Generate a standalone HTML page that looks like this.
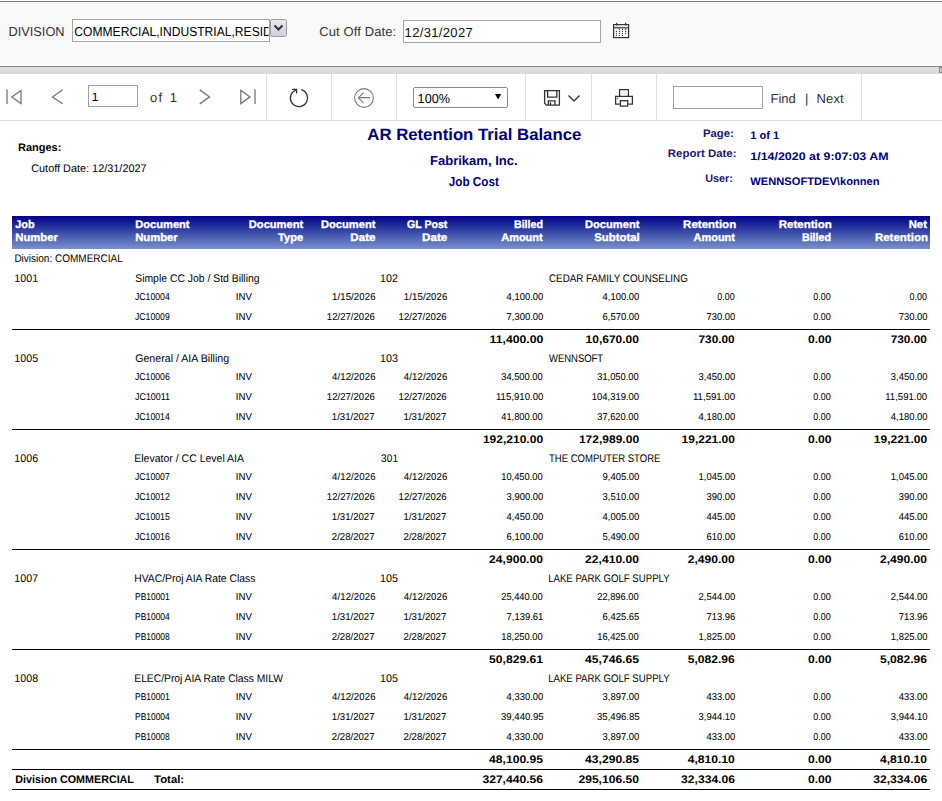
<!DOCTYPE html>
<html><head><meta charset="utf-8"><style>
html,body{margin:0;padding:0;background:#fff;width:942px;height:801px;overflow:hidden}
svg{position:absolute;left:0;top:0;font-family:"Liberation Sans",sans-serif;text-rendering:geometricPrecision}
</style></head><body>
<svg width="942" height="801" viewBox="0 0 942 801">
<defs><linearGradient id="hg" x1="0" y1="0" x2="0" y2="1"><stop offset="0" stop-color="#000088"/><stop offset="0.5" stop-color="#3a4ca8"/><stop offset="1" stop-color="#7b91cc"/></linearGradient>
<clipPath id="c1"><rect x="73" y="20" width="195.5" height="21"/></clipPath>
<linearGradient id="dd" x1="0" y1="0" x2="0" y2="1"><stop offset="0" stop-color="#e8e8ee"/><stop offset="1" stop-color="#cfd0da"/></linearGradient></defs>
<!-- parameter area -->
<rect x="0" y="0" width="942" height="67" fill="#fff"/>
<rect x="0" y="1" width="942" height="1" fill="#808080"/>
<rect x="0" y="3" width="942" height="62" fill="#f9f9f9"/>
<rect x="0" y="66" width="942" height="1" fill="#858585"/>
<rect x="0" y="67" width="942" height="7" fill="#dcdcdc"/>
<rect x="939" y="67" width="3" height="6" fill="#8c8c8c"/><rect x="940" y="68" width="2" height="4" fill="#c2c2c2"/>
<rect x="72.5" y="19.5" width="197" height="22" fill="#fff" stroke="#a5a5a5" stroke-width="1"/>
<rect x="270.5" y="19.5" width="16" height="17" rx="2" fill="url(#dd)" stroke="#9a9aa4" stroke-width="1"/>
<path d="M274.5 25.5 L278.5 29.5 L282.5 25.5" fill="none" stroke="#333" stroke-width="2"/>
<rect x="403.5" y="20.5" width="197" height="22" fill="#fff" stroke="#a5a5a5" stroke-width="1"/>
<g fill="none" stroke="#333" stroke-width="1.2">
<rect x="613.6" y="24.6" width="15" height="13" />
<line x1="613.6" y1="27.8" x2="628.6" y2="27.8"/>
<line x1="616.6" y1="22.8" x2="616.6" y2="25.5"/><line x1="625.6" y1="22.8" x2="625.6" y2="25.5"/>
</g>
<g fill="#333">
<circle cx="619.5" cy="29.4" r="0.6"/><circle cx="622.5" cy="29.4" r="0.6"/><circle cx="625.6" cy="29.4" r="0.6"/>
<circle cx="616.4" cy="31.4" r="0.6"/><circle cx="619.5" cy="31.4" r="0.6"/><circle cx="622.5" cy="31.4" r="0.6"/><circle cx="625.6" cy="31.4" r="0.6"/>
<circle cx="616.4" cy="33.4" r="0.6"/><circle cx="619.5" cy="33.4" r="0.6"/><circle cx="622.5" cy="33.4" r="0.6"/><circle cx="625.6" cy="33.4" r="0.6"/>
<circle cx="616.4" cy="35.4" r="0.6"/><circle cx="619.5" cy="35.4" r="0.6"/><circle cx="622.5" cy="35.4" r="0.6"/>
</g>
<!-- toolbar -->
<rect x="0" y="120" width="942" height="1" fill="#e0e0e0"/>
<rect x="266" y="74" width="1" height="46" fill="#e0e0e0"/><rect x="331" y="74" width="1" height="46" fill="#e0e0e0"/><rect x="396" y="74" width="1" height="46" fill="#e0e0e0"/><rect x="525" y="74" width="1" height="46" fill="#e0e0e0"/><rect x="591" y="74" width="1" height="46" fill="#e0e0e0"/><rect x="656" y="74" width="1" height="46" fill="#e0e0e0"/><rect x="861" y="74" width="1" height="46" fill="#e0e0e0"/>
<g fill="none" stroke="#777" stroke-width="1.3">
<line x1="7" y1="89.3" x2="7" y2="104.1"/>
<path d="M21 90.5 L11.8 97 L21 103.5 Z"/>
<path d="M62.6 89.8 L52.5 97 L62.6 103.8"/>
<path d="M199.8 89.9 L209.5 96.9 L199.8 103.9"/>
<path d="M240.8 90.2 L250 96.9 L240.8 103.6 Z"/>
<line x1="255" y1="89.3" x2="255" y2="104.1"/>
</g>
<rect x="88.5" y="85.5" width="49" height="21" fill="#fff" stroke="#a0a0a0"/>
<g fill="none" stroke="#333" stroke-width="1.3">
<path d="M301.3 89.7 A8.6 8.6 0 1 1 292.9 91.9 L296.4 89.4"/>
<path d="M292.2 89.4 H296.6 V93.5"/>
</g>
<g fill="none" stroke="#7a7a7a" stroke-width="1.1">
<circle cx="364" cy="98" r="9.4"/>
<path d="M369.8 97.6 H358.8 M363.6 92.6 L358.4 97.8 L363.6 103.2"/>
</g>
<rect x="413.5" y="87.5" width="94" height="20" rx="1.5" fill="#fff" stroke="#8a8a8a"/>
<path d="M495 94 L501.2 94 L498.1 99.6 Z" fill="#000"/>
<g fill="none" stroke="#333" stroke-width="1.3">
<path d="M544.6 90.6 H559.4 V105.1 H546.4 L544.6 103.3 Z"/>
<path d="M547.6 90.6 V97.2 H556.8 V90.6"/>
<path d="M548.4 105.1 V100.8 H555 V105.1"/>
<line x1="550.5" y1="102.3" x2="550.5" y2="105"/>
<path d="M568.5 95.5 L574 101 L579.5 95.5"/>
</g>
<g fill="none" stroke="#333" stroke-width="1.3">
<path d="M619.6 96.3 V89.6 H628.4 V96.3"/>
<path d="M619.6 104.1 H615.6 V96.3 H632.4 V104.1 H628.4"/>
<rect x="620.3" y="100.7" width="7.4" height="5.4"/>
</g>
<circle cx="617.6" cy="98.3" r="0.6" fill="#333"/>
<rect x="673.5" y="86.5" width="89" height="22" fill="#fff" stroke="#a0a0a0"/>
<!-- report header bar -->
<rect x="12" y="216" width="918" height="33" fill="url(#hg)"/>
<rect x="12" y="329" width="918" height="1" fill="#000"/><rect x="12" y="429" width="918" height="1" fill="#000"/><rect x="12" y="549" width="918" height="1" fill="#000"/><rect x="12" y="649" width="918" height="1" fill="#000"/><rect x="12" y="749" width="918" height="1" fill="#000"/><rect x="12" y="769" width="918" height="1" fill="#000"/><rect x="12" y="789" width="918" height="1" fill="#000"/>
<text x="8.50" y="36.00" font-size="13" fill="#333" textLength="56.08" lengthAdjust="spacingAndGlyphs">DIVISION</text><text x="74.30" y="36.00" font-size="13" fill="#000" clip-path="url(#c1)" textLength="197.53" lengthAdjust="spacingAndGlyphs">COMMERCIAL,INDUSTRIAL,RESID</text><text x="319.30" y="36.00" font-size="13" fill="#333" textLength="76.84" lengthAdjust="spacing">Cut Off Date:</text><text x="404.60" y="36.50" font-size="13" fill="#111" textLength="68.08" lengthAdjust="spacing">12/31/2027</text><text x="91.70" y="101.00" font-size="12" fill="#000" >1</text><text x="150.00" y="102.00" font-size="13" fill="#333" textLength="12.14" lengthAdjust="spacing">of</text><text x="169.80" y="102.00" font-size="13" fill="#333" >1</text><text x="417.60" y="103.00" font-size="13" fill="#000" textLength="32.35" lengthAdjust="spacingAndGlyphs">100%</text><text x="770.50" y="103.00" font-size="13" fill="#333" >Find</text><text x="805.00" y="103.00" font-size="13" fill="#333" >|</text><text x="816.60" y="103.00" font-size="13" fill="#333" textLength="27.03" lengthAdjust="spacing">Next</text><text transform="translate(18.00 151.00) scale(1.0000 1)" font-size="11" font-weight="bold" fill="#000">Ranges:</text><text transform="translate(31.20 172.00) scale(0.9897 1)" font-size="11" fill="#000">Cutoff Date: 12/31/2027</text><text transform="translate(367.30 140.00) scale(1.0147 1)" font-size="16.5" font-weight="bold" fill="#000080">AR Retention Trial Balance</text><text transform="translate(430.00 165.00) scale(1.0023 1)" font-size="13" font-weight="bold" fill="#000080">Fabrikam, Inc.</text><text transform="translate(448.70 186.00) scale(0.9018 1)" font-size="13" font-weight="bold" fill="#000080">Job Cost</text><text transform="translate(733.80 137.30) scale(1.0276 1)" font-size="11" font-weight="bold" fill="#1a1a6e" text-anchor="end">Page:</text><text transform="translate(736.56 157.20) scale(1.0415 1)" font-size="11" font-weight="bold" fill="#1a1a6e" text-anchor="end">Report Date:</text><text transform="translate(732.92 182.40) scale(0.9857 1)" font-size="11" font-weight="bold" fill="#1a1a6e" text-anchor="end">User:</text><text transform="translate(750.30 139.10) scale(1.0069 1)" font-size="11" font-weight="bold" fill="#000080">1 of 1</text><text transform="translate(750.30 160.30) scale(1.1287 1)" font-size="11" font-weight="bold" fill="#000080">1/14/2020 at 9:07:03 AM</text><text transform="translate(750.30 185.00) scale(1.0118 1)" font-size="11" font-weight="bold" fill="#000080">WENNSOFTDEV\konnen</text><text transform="translate(15.30 228.00) scale(0.9895 1)" font-size="11" font-weight="bold" fill="#fff" stroke="#fff" stroke-width="0.35">Job</text><text transform="translate(15.30 241.00) scale(1.0238 1)" font-size="11" font-weight="bold" fill="#fff" stroke="#fff" stroke-width="0.35">Number</text><text transform="translate(135.20 228.00) scale(1.0111 1)" font-size="11" font-weight="bold" fill="#fff" stroke="#fff" stroke-width="0.35">Document</text><text transform="translate(135.20 241.00) scale(1.0238 1)" font-size="11" font-weight="bold" fill="#fff" stroke="#fff" stroke-width="0.35">Number</text><text transform="translate(303.18 228.00) scale(1.0111 1)" font-size="11" font-weight="bold" fill="#fff" stroke="#fff" stroke-width="0.35" text-anchor="end">Document</text><text transform="translate(303.26 241.00) scale(1.0120 1)" font-size="11" font-weight="bold" fill="#fff" stroke="#fff" stroke-width="0.35" text-anchor="end">Type</text><text transform="translate(375.38 228.00) scale(1.0111 1)" font-size="11" font-weight="bold" fill="#fff" stroke="#fff" stroke-width="0.35" text-anchor="end">Document</text><text transform="translate(375.44 241.00) scale(1.0542 1)" font-size="11" font-weight="bold" fill="#fff" stroke="#fff" stroke-width="0.35" text-anchor="end">Date</text><text transform="translate(447.38 228.00) scale(0.9619 1)" font-size="11" font-weight="bold" fill="#fff" stroke="#fff" stroke-width="0.35" text-anchor="end">GL Post</text><text transform="translate(447.24 241.00) scale(1.0542 1)" font-size="11" font-weight="bold" fill="#fff" stroke="#fff" stroke-width="0.35" text-anchor="end">Date</text><text transform="translate(543.05 228.00) scale(0.9733 1)" font-size="11" font-weight="bold" fill="#fff" stroke="#fff" stroke-width="0.35" text-anchor="end">Billed</text><text transform="translate(542.65 241.00) scale(0.9976 1)" font-size="11" font-weight="bold" fill="#fff" stroke="#fff" stroke-width="0.35" text-anchor="end">Amount</text><text transform="translate(639.38 228.00) scale(1.0111 1)" font-size="11" font-weight="bold" fill="#fff" stroke="#fff" stroke-width="0.35" text-anchor="end">Document</text><text transform="translate(639.60 241.00) scale(1.0295 1)" font-size="11" font-weight="bold" fill="#fff" stroke="#fff" stroke-width="0.35" text-anchor="end">Subtotal</text><text transform="translate(736.17 228.00) scale(1.0460 1)" font-size="11" font-weight="bold" fill="#fff" stroke="#fff" stroke-width="0.35" text-anchor="end">Retention</text><text transform="translate(734.95 241.00) scale(0.9976 1)" font-size="11" font-weight="bold" fill="#fff" stroke="#fff" stroke-width="0.35" text-anchor="end">Amount</text><text transform="translate(831.87 228.00) scale(1.0460 1)" font-size="11" font-weight="bold" fill="#fff" stroke="#fff" stroke-width="0.35" text-anchor="end">Retention</text><text transform="translate(831.05 241.00) scale(0.9733 1)" font-size="11" font-weight="bold" fill="#fff" stroke="#fff" stroke-width="0.35" text-anchor="end">Billed</text><text transform="translate(926.93 228.00) scale(1.0278 1)" font-size="11" font-weight="bold" fill="#fff" stroke="#fff" stroke-width="0.35" text-anchor="end">Net</text><text transform="translate(927.97 241.00) scale(1.0460 1)" font-size="11" font-weight="bold" fill="#fff" stroke="#fff" stroke-width="0.35" text-anchor="end">Retention</text><text transform="translate(14.39 262.00) scale(0.9093 1)" font-size="11" fill="#000">Division: COMMERCIAL</text><text transform="translate(14.33 282.00) scale(0.9696 1)" font-size="11" fill="#000">1001</text><text transform="translate(135.20 282.00) scale(0.9458 1)" font-size="11" fill="#000">Simple CC Job / Std Billing</text><text transform="translate(380.12 282.00) scale(0.9765 1)" font-size="11" fill="#000">102</text><text transform="translate(549.00 282.00) scale(0.8929 1)" font-size="11" fill="#000">CEDAR FAMILY COUNSELING</text><text transform="translate(135.00 300.00) scale(1 1.04)" font-size="9.6" fill="#000" stroke="#000" stroke-width="0.05" textLength="34.71" lengthAdjust="spacingAndGlyphs">JC10004</text><text transform="translate(235.80 300.00) scale(1 1.04)" font-size="9.6" fill="#000" stroke="#000" stroke-width="0.05" >INV</text><text transform="translate(375.49 300.00) scale(1 1.04)" font-size="9.6" fill="#000" stroke="#000" stroke-width="0.05" text-anchor="end" textLength="43.49" lengthAdjust="spacing">1/15/2026</text><text transform="translate(447.29 300.00) scale(1 1.04)" font-size="9.6" fill="#000" stroke="#000" stroke-width="0.05" text-anchor="end" textLength="43.49" lengthAdjust="spacing">1/15/2026</text><text transform="translate(543.36 300.00) scale(1 1.04)" font-size="9.6" fill="#000" stroke="#000" stroke-width="0.05" text-anchor="end" textLength="36.76" lengthAdjust="spacingAndGlyphs">4,100.00</text><text transform="translate(639.36 300.00) scale(1 1.04)" font-size="9.6" fill="#000" stroke="#000" stroke-width="0.05" text-anchor="end" textLength="36.76" lengthAdjust="spacingAndGlyphs">4,100.00</text><text transform="translate(734.69 300.00) scale(1 1.04)" font-size="9.6" fill="#000" stroke="#000" stroke-width="0.05" text-anchor="end" textLength="17.39" lengthAdjust="spacingAndGlyphs">0.00</text><text transform="translate(830.69 300.00) scale(1 1.04)" font-size="9.6" fill="#000" stroke="#000" stroke-width="0.05" text-anchor="end" textLength="17.39" lengthAdjust="spacingAndGlyphs">0.00</text><text transform="translate(926.89 300.00) scale(1 1.04)" font-size="9.6" fill="#000" stroke="#000" stroke-width="0.05" text-anchor="end" textLength="17.39" lengthAdjust="spacingAndGlyphs">0.00</text><text transform="translate(135.00 320.00) scale(1 1.04)" font-size="9.6" fill="#000" stroke="#000" stroke-width="0.05" textLength="34.71" lengthAdjust="spacingAndGlyphs">JC10009</text><text transform="translate(235.80 320.00) scale(1 1.04)" font-size="9.6" fill="#000" stroke="#000" stroke-width="0.05" >INV</text><text transform="translate(374.82 320.00) scale(1 1.04)" font-size="9.6" fill="#000" stroke="#000" stroke-width="0.05" text-anchor="end" >12/27/2026</text><text transform="translate(446.62 320.00) scale(1 1.04)" font-size="9.6" fill="#000" stroke="#000" stroke-width="0.05" text-anchor="end" >12/27/2026</text><text transform="translate(543.36 320.00) scale(1 1.04)" font-size="9.6" fill="#000" stroke="#000" stroke-width="0.05" text-anchor="end" textLength="36.76" lengthAdjust="spacingAndGlyphs">7,300.00</text><text transform="translate(639.36 320.00) scale(1 1.04)" font-size="9.6" fill="#000" stroke="#000" stroke-width="0.05" text-anchor="end" textLength="36.76" lengthAdjust="spacingAndGlyphs">6,570.00</text><text transform="translate(735.34 320.00) scale(1 1.04)" font-size="9.6" fill="#000" stroke="#000" stroke-width="0.05" text-anchor="end" textLength="28.84" lengthAdjust="spacingAndGlyphs">730.00</text><text transform="translate(830.69 320.00) scale(1 1.04)" font-size="9.6" fill="#000" stroke="#000" stroke-width="0.05" text-anchor="end" textLength="17.39" lengthAdjust="spacingAndGlyphs">0.00</text><text transform="translate(927.54 320.00) scale(1 1.04)" font-size="9.6" fill="#000" stroke="#000" stroke-width="0.05" text-anchor="end" textLength="28.84" lengthAdjust="spacingAndGlyphs">730.00</text><text transform="translate(543.38 342.70) scale(1.1125 1)" font-size="11" font-weight="bold" fill="#000" text-anchor="end">11,400.00</text><text transform="translate(638.93 342.70) scale(1.0898 1)" font-size="11" font-weight="bold" fill="#000" text-anchor="end">10,670.00</text><text transform="translate(734.63 342.70) scale(1.0735 1)" font-size="11" font-weight="bold" fill="#000" text-anchor="end">730.00</text><text transform="translate(831.46 342.70) scale(1.1000 1)" font-size="11" font-weight="bold" fill="#000" text-anchor="end">0.00</text><text transform="translate(926.83 342.70) scale(1.0735 1)" font-size="11" font-weight="bold" fill="#000" text-anchor="end">730.00</text><text transform="translate(14.33 362.00) scale(0.9696 1)" font-size="11" fill="#000">1005</text><text transform="translate(135.20 362.00) scale(0.9660 1)" font-size="11" fill="#000">General / AIA Billing</text><text transform="translate(380.12 362.00) scale(0.9765 1)" font-size="11" fill="#000">103</text><text transform="translate(549.00 362.00) scale(0.8603 1)" font-size="11" fill="#000">WENNSOFT</text><text transform="translate(135.00 380.00) scale(1 1.04)" font-size="9.6" fill="#000" stroke="#000" stroke-width="0.05" textLength="34.71" lengthAdjust="spacingAndGlyphs">JC10006</text><text transform="translate(235.80 380.00) scale(1 1.04)" font-size="9.6" fill="#000" stroke="#000" stroke-width="0.05" >INV</text><text transform="translate(375.49 380.00) scale(1 1.04)" font-size="9.6" fill="#000" stroke="#000" stroke-width="0.05" text-anchor="end" textLength="43.49" lengthAdjust="spacing">4/12/2026</text><text transform="translate(447.29 380.00) scale(1 1.04)" font-size="9.6" fill="#000" stroke="#000" stroke-width="0.05" text-anchor="end" textLength="43.49" lengthAdjust="spacing">4/12/2026</text><text transform="translate(542.69 380.00) scale(1 1.04)" font-size="9.6" fill="#000" stroke="#000" stroke-width="0.05" text-anchor="end" textLength="41.49" lengthAdjust="spacingAndGlyphs">34,500.00</text><text transform="translate(638.69 380.00) scale(1 1.04)" font-size="9.6" fill="#000" stroke="#000" stroke-width="0.05" text-anchor="end" textLength="41.49" lengthAdjust="spacingAndGlyphs">31,050.00</text><text transform="translate(735.36 380.00) scale(1 1.04)" font-size="9.6" fill="#000" stroke="#000" stroke-width="0.05" text-anchor="end" textLength="36.76" lengthAdjust="spacingAndGlyphs">3,450.00</text><text transform="translate(830.69 380.00) scale(1 1.04)" font-size="9.6" fill="#000" stroke="#000" stroke-width="0.05" text-anchor="end" textLength="17.39" lengthAdjust="spacingAndGlyphs">0.00</text><text transform="translate(927.56 380.00) scale(1 1.04)" font-size="9.6" fill="#000" stroke="#000" stroke-width="0.05" text-anchor="end" textLength="36.76" lengthAdjust="spacingAndGlyphs">3,450.00</text><text transform="translate(135.00 400.00) scale(1 1.04)" font-size="9.6" fill="#000" stroke="#000" stroke-width="0.05" textLength="35.00" lengthAdjust="spacingAndGlyphs">JC10011</text><text transform="translate(235.80 400.00) scale(1 1.04)" font-size="9.6" fill="#000" stroke="#000" stroke-width="0.05" >INV</text><text transform="translate(374.82 400.00) scale(1 1.04)" font-size="9.6" fill="#000" stroke="#000" stroke-width="0.05" text-anchor="end" >12/27/2026</text><text transform="translate(446.62 400.00) scale(1 1.04)" font-size="9.6" fill="#000" stroke="#000" stroke-width="0.05" text-anchor="end" >12/27/2026</text><text transform="translate(543.31 400.00) scale(1 1.04)" font-size="9.6" fill="#000" stroke="#000" stroke-width="0.05" text-anchor="end" >115,910.00</text><text transform="translate(639.02 400.00) scale(1 1.04)" font-size="9.6" fill="#000" stroke="#000" stroke-width="0.05" text-anchor="end" textLength="47.22" lengthAdjust="spacingAndGlyphs">104,319.00</text><text transform="translate(734.97 400.00) scale(1 1.04)" font-size="9.6" fill="#000" stroke="#000" stroke-width="0.05" text-anchor="end" >11,591.00</text><text transform="translate(830.69 400.00) scale(1 1.04)" font-size="9.6" fill="#000" stroke="#000" stroke-width="0.05" text-anchor="end" textLength="17.39" lengthAdjust="spacingAndGlyphs">0.00</text><text transform="translate(927.17 400.00) scale(1 1.04)" font-size="9.6" fill="#000" stroke="#000" stroke-width="0.05" text-anchor="end" >11,591.00</text><text transform="translate(135.00 420.00) scale(1 1.04)" font-size="9.6" fill="#000" stroke="#000" stroke-width="0.05" textLength="34.71" lengthAdjust="spacingAndGlyphs">JC10014</text><text transform="translate(235.80 420.00) scale(1 1.04)" font-size="9.6" fill="#000" stroke="#000" stroke-width="0.05" >INV</text><text transform="translate(374.49 420.00) scale(1 1.04)" font-size="9.6" fill="#000" stroke="#000" stroke-width="0.05" text-anchor="end" >1/31/2027</text><text transform="translate(446.29 420.00) scale(1 1.04)" font-size="9.6" fill="#000" stroke="#000" stroke-width="0.05" text-anchor="end" >1/31/2027</text><text transform="translate(542.69 420.00) scale(1 1.04)" font-size="9.6" fill="#000" stroke="#000" stroke-width="0.05" text-anchor="end" textLength="41.49" lengthAdjust="spacingAndGlyphs">41,800.00</text><text transform="translate(638.69 420.00) scale(1 1.04)" font-size="9.6" fill="#000" stroke="#000" stroke-width="0.05" text-anchor="end" textLength="41.49" lengthAdjust="spacingAndGlyphs">37,620.00</text><text transform="translate(735.36 420.00) scale(1 1.04)" font-size="9.6" fill="#000" stroke="#000" stroke-width="0.05" text-anchor="end" textLength="36.76" lengthAdjust="spacingAndGlyphs">4,180.00</text><text transform="translate(830.69 420.00) scale(1 1.04)" font-size="9.6" fill="#000" stroke="#000" stroke-width="0.05" text-anchor="end" textLength="17.39" lengthAdjust="spacingAndGlyphs">0.00</text><text transform="translate(927.56 420.00) scale(1 1.04)" font-size="9.6" fill="#000" stroke="#000" stroke-width="0.05" text-anchor="end" textLength="36.76" lengthAdjust="spacingAndGlyphs">4,180.00</text><text transform="translate(543.07 442.70) scale(1.0927 1)" font-size="11" font-weight="bold" fill="#000" text-anchor="end">192,210.00</text><text transform="translate(639.07 442.70) scale(1.0927 1)" font-size="11" font-weight="bold" fill="#000" text-anchor="end">172,989.00</text><text transform="translate(734.93 442.70) scale(1.0898 1)" font-size="11" font-weight="bold" fill="#000" text-anchor="end">19,221.00</text><text transform="translate(831.46 442.70) scale(1.1000 1)" font-size="11" font-weight="bold" fill="#000" text-anchor="end">0.00</text><text transform="translate(927.13 442.70) scale(1.0898 1)" font-size="11" font-weight="bold" fill="#000" text-anchor="end">19,221.00</text><text transform="translate(14.33 462.00) scale(0.9696 1)" font-size="11" fill="#000">1006</text><text transform="translate(134.24 462.00) scale(0.9553 1)" font-size="11" fill="#000">Elevator / CC Level AIA</text><text transform="translate(381.10 462.00) scale(0.9222 1)" font-size="11" fill="#000">301</text><text transform="translate(549.00 462.00) scale(0.8651 1)" font-size="11" fill="#000">THE COMPUTER STORE</text><text transform="translate(135.00 480.00) scale(1 1.04)" font-size="9.6" fill="#000" stroke="#000" stroke-width="0.05" textLength="34.71" lengthAdjust="spacingAndGlyphs">JC10007</text><text transform="translate(235.80 480.00) scale(1 1.04)" font-size="9.6" fill="#000" stroke="#000" stroke-width="0.05" >INV</text><text transform="translate(375.49 480.00) scale(1 1.04)" font-size="9.6" fill="#000" stroke="#000" stroke-width="0.05" text-anchor="end" textLength="43.49" lengthAdjust="spacing">4/12/2026</text><text transform="translate(447.29 480.00) scale(1 1.04)" font-size="9.6" fill="#000" stroke="#000" stroke-width="0.05" text-anchor="end" textLength="43.49" lengthAdjust="spacing">4/12/2026</text><text transform="translate(542.69 480.00) scale(1 1.04)" font-size="9.6" fill="#000" stroke="#000" stroke-width="0.05" text-anchor="end" textLength="41.49" lengthAdjust="spacingAndGlyphs">10,450.00</text><text transform="translate(639.36 480.00) scale(1 1.04)" font-size="9.6" fill="#000" stroke="#000" stroke-width="0.05" text-anchor="end" textLength="36.76" lengthAdjust="spacingAndGlyphs">9,405.00</text><text transform="translate(735.36 480.00) scale(1 1.04)" font-size="9.6" fill="#000" stroke="#000" stroke-width="0.05" text-anchor="end" textLength="36.76" lengthAdjust="spacingAndGlyphs">1,045.00</text><text transform="translate(830.69 480.00) scale(1 1.04)" font-size="9.6" fill="#000" stroke="#000" stroke-width="0.05" text-anchor="end" textLength="17.39" lengthAdjust="spacingAndGlyphs">0.00</text><text transform="translate(927.56 480.00) scale(1 1.04)" font-size="9.6" fill="#000" stroke="#000" stroke-width="0.05" text-anchor="end" textLength="36.76" lengthAdjust="spacingAndGlyphs">1,045.00</text><text transform="translate(135.00 500.00) scale(1 1.04)" font-size="9.6" fill="#000" stroke="#000" stroke-width="0.05" textLength="34.71" lengthAdjust="spacingAndGlyphs">JC10012</text><text transform="translate(235.80 500.00) scale(1 1.04)" font-size="9.6" fill="#000" stroke="#000" stroke-width="0.05" >INV</text><text transform="translate(374.82 500.00) scale(1 1.04)" font-size="9.6" fill="#000" stroke="#000" stroke-width="0.05" text-anchor="end" >12/27/2026</text><text transform="translate(446.62 500.00) scale(1 1.04)" font-size="9.6" fill="#000" stroke="#000" stroke-width="0.05" text-anchor="end" >12/27/2026</text><text transform="translate(543.36 500.00) scale(1 1.04)" font-size="9.6" fill="#000" stroke="#000" stroke-width="0.05" text-anchor="end" textLength="36.76" lengthAdjust="spacingAndGlyphs">3,900.00</text><text transform="translate(639.36 500.00) scale(1 1.04)" font-size="9.6" fill="#000" stroke="#000" stroke-width="0.05" text-anchor="end" textLength="36.76" lengthAdjust="spacingAndGlyphs">3,510.00</text><text transform="translate(735.34 500.00) scale(1 1.04)" font-size="9.6" fill="#000" stroke="#000" stroke-width="0.05" text-anchor="end" textLength="28.84" lengthAdjust="spacingAndGlyphs">390.00</text><text transform="translate(830.69 500.00) scale(1 1.04)" font-size="9.6" fill="#000" stroke="#000" stroke-width="0.05" text-anchor="end" textLength="17.39" lengthAdjust="spacingAndGlyphs">0.00</text><text transform="translate(927.54 500.00) scale(1 1.04)" font-size="9.6" fill="#000" stroke="#000" stroke-width="0.05" text-anchor="end" textLength="28.84" lengthAdjust="spacingAndGlyphs">390.00</text><text transform="translate(135.00 520.00) scale(1 1.04)" font-size="9.6" fill="#000" stroke="#000" stroke-width="0.05" textLength="34.71" lengthAdjust="spacingAndGlyphs">JC10015</text><text transform="translate(235.80 520.00) scale(1 1.04)" font-size="9.6" fill="#000" stroke="#000" stroke-width="0.05" >INV</text><text transform="translate(374.49 520.00) scale(1 1.04)" font-size="9.6" fill="#000" stroke="#000" stroke-width="0.05" text-anchor="end" >1/31/2027</text><text transform="translate(446.29 520.00) scale(1 1.04)" font-size="9.6" fill="#000" stroke="#000" stroke-width="0.05" text-anchor="end" >1/31/2027</text><text transform="translate(543.36 520.00) scale(1 1.04)" font-size="9.6" fill="#000" stroke="#000" stroke-width="0.05" text-anchor="end" textLength="36.76" lengthAdjust="spacingAndGlyphs">4,450.00</text><text transform="translate(639.36 520.00) scale(1 1.04)" font-size="9.6" fill="#000" stroke="#000" stroke-width="0.05" text-anchor="end" textLength="36.76" lengthAdjust="spacingAndGlyphs">4,005.00</text><text transform="translate(735.34 520.00) scale(1 1.04)" font-size="9.6" fill="#000" stroke="#000" stroke-width="0.05" text-anchor="end" textLength="28.84" lengthAdjust="spacingAndGlyphs">445.00</text><text transform="translate(830.69 520.00) scale(1 1.04)" font-size="9.6" fill="#000" stroke="#000" stroke-width="0.05" text-anchor="end" textLength="17.39" lengthAdjust="spacingAndGlyphs">0.00</text><text transform="translate(927.54 520.00) scale(1 1.04)" font-size="9.6" fill="#000" stroke="#000" stroke-width="0.05" text-anchor="end" textLength="28.84" lengthAdjust="spacingAndGlyphs">445.00</text><text transform="translate(135.00 540.00) scale(1 1.04)" font-size="9.6" fill="#000" stroke="#000" stroke-width="0.05" textLength="34.71" lengthAdjust="spacingAndGlyphs">JC10016</text><text transform="translate(235.80 540.00) scale(1 1.04)" font-size="9.6" fill="#000" stroke="#000" stroke-width="0.05" >INV</text><text transform="translate(374.49 540.00) scale(1 1.04)" font-size="9.6" fill="#000" stroke="#000" stroke-width="0.05" text-anchor="end" >2/28/2027</text><text transform="translate(446.29 540.00) scale(1 1.04)" font-size="9.6" fill="#000" stroke="#000" stroke-width="0.05" text-anchor="end" >2/28/2027</text><text transform="translate(543.36 540.00) scale(1 1.04)" font-size="9.6" fill="#000" stroke="#000" stroke-width="0.05" text-anchor="end" textLength="36.76" lengthAdjust="spacingAndGlyphs">6,100.00</text><text transform="translate(639.36 540.00) scale(1 1.04)" font-size="9.6" fill="#000" stroke="#000" stroke-width="0.05" text-anchor="end" textLength="36.76" lengthAdjust="spacingAndGlyphs">5,490.00</text><text transform="translate(735.34 540.00) scale(1 1.04)" font-size="9.6" fill="#000" stroke="#000" stroke-width="0.05" text-anchor="end" textLength="28.84" lengthAdjust="spacingAndGlyphs">610.00</text><text transform="translate(830.69 540.00) scale(1 1.04)" font-size="9.6" fill="#000" stroke="#000" stroke-width="0.05" text-anchor="end" textLength="17.39" lengthAdjust="spacingAndGlyphs">0.00</text><text transform="translate(927.54 540.00) scale(1 1.04)" font-size="9.6" fill="#000" stroke="#000" stroke-width="0.05" text-anchor="end" textLength="28.84" lengthAdjust="spacingAndGlyphs">610.00</text><text transform="translate(542.93 562.70) scale(1.1000 1)" font-size="11" font-weight="bold" fill="#000" text-anchor="end">24,900.00</text><text transform="translate(638.93 562.70) scale(1.1000 1)" font-size="11" font-weight="bold" fill="#000" text-anchor="end">22,410.00</text><text transform="translate(734.81 562.70) scale(1.0977 1)" font-size="11" font-weight="bold" fill="#000" text-anchor="end">2,490.00</text><text transform="translate(831.46 562.70) scale(1.1000 1)" font-size="11" font-weight="bold" fill="#000" text-anchor="end">0.00</text><text transform="translate(927.01 562.70) scale(1.0977 1)" font-size="11" font-weight="bold" fill="#000" text-anchor="end">2,490.00</text><text transform="translate(14.33 582.00) scale(0.9696 1)" font-size="11" fill="#000">1007</text><text transform="translate(134.26 582.00) scale(0.9398 1)" font-size="11" fill="#000">HVAC/Proj AIA Rate Class</text><text transform="translate(380.12 582.00) scale(0.9765 1)" font-size="11" fill="#000">105</text><text transform="translate(548.13 582.00) scale(0.8739 1)" font-size="11" fill="#000">LAKE PARK GOLF SUPPLY</text><text transform="translate(135.00 600.00) scale(1 1.04)" font-size="9.6" fill="#000" stroke="#000" stroke-width="0.05" textLength="34.78" lengthAdjust="spacingAndGlyphs">PB10001</text><text transform="translate(235.80 600.00) scale(1 1.04)" font-size="9.6" fill="#000" stroke="#000" stroke-width="0.05" >INV</text><text transform="translate(375.49 600.00) scale(1 1.04)" font-size="9.6" fill="#000" stroke="#000" stroke-width="0.05" text-anchor="end" textLength="43.49" lengthAdjust="spacing">4/12/2026</text><text transform="translate(447.29 600.00) scale(1 1.04)" font-size="9.6" fill="#000" stroke="#000" stroke-width="0.05" text-anchor="end" textLength="43.49" lengthAdjust="spacing">4/12/2026</text><text transform="translate(542.69 600.00) scale(1 1.04)" font-size="9.6" fill="#000" stroke="#000" stroke-width="0.05" text-anchor="end" textLength="41.49" lengthAdjust="spacingAndGlyphs">25,440.00</text><text transform="translate(638.69 600.00) scale(1 1.04)" font-size="9.6" fill="#000" stroke="#000" stroke-width="0.05" text-anchor="end" textLength="41.49" lengthAdjust="spacingAndGlyphs">22,896.00</text><text transform="translate(735.36 600.00) scale(1 1.04)" font-size="9.6" fill="#000" stroke="#000" stroke-width="0.05" text-anchor="end" textLength="36.76" lengthAdjust="spacingAndGlyphs">2,544.00</text><text transform="translate(830.69 600.00) scale(1 1.04)" font-size="9.6" fill="#000" stroke="#000" stroke-width="0.05" text-anchor="end" textLength="17.39" lengthAdjust="spacingAndGlyphs">0.00</text><text transform="translate(927.56 600.00) scale(1 1.04)" font-size="9.6" fill="#000" stroke="#000" stroke-width="0.05" text-anchor="end" textLength="36.76" lengthAdjust="spacingAndGlyphs">2,544.00</text><text transform="translate(135.00 620.00) scale(1 1.04)" font-size="9.6" fill="#000" stroke="#000" stroke-width="0.05" textLength="34.78" lengthAdjust="spacingAndGlyphs">PB10004</text><text transform="translate(235.80 620.00) scale(1 1.04)" font-size="9.6" fill="#000" stroke="#000" stroke-width="0.05" >INV</text><text transform="translate(374.49 620.00) scale(1 1.04)" font-size="9.6" fill="#000" stroke="#000" stroke-width="0.05" text-anchor="end" >1/31/2027</text><text transform="translate(446.29 620.00) scale(1 1.04)" font-size="9.6" fill="#000" stroke="#000" stroke-width="0.05" text-anchor="end" >1/31/2027</text><text transform="translate(543.36 620.00) scale(1 1.04)" font-size="9.6" fill="#000" stroke="#000" stroke-width="0.05" text-anchor="end" textLength="36.76" lengthAdjust="spacingAndGlyphs">7,139.61</text><text transform="translate(639.36 620.00) scale(1 1.04)" font-size="9.6" fill="#000" stroke="#000" stroke-width="0.05" text-anchor="end" textLength="36.76" lengthAdjust="spacingAndGlyphs">6,425.65</text><text transform="translate(735.34 620.00) scale(1 1.04)" font-size="9.6" fill="#000" stroke="#000" stroke-width="0.05" text-anchor="end" textLength="28.84" lengthAdjust="spacingAndGlyphs">713.96</text><text transform="translate(830.69 620.00) scale(1 1.04)" font-size="9.6" fill="#000" stroke="#000" stroke-width="0.05" text-anchor="end" textLength="17.39" lengthAdjust="spacingAndGlyphs">0.00</text><text transform="translate(927.54 620.00) scale(1 1.04)" font-size="9.6" fill="#000" stroke="#000" stroke-width="0.05" text-anchor="end" textLength="28.84" lengthAdjust="spacingAndGlyphs">713.96</text><text transform="translate(135.00 640.00) scale(1 1.04)" font-size="9.6" fill="#000" stroke="#000" stroke-width="0.05" textLength="34.78" lengthAdjust="spacingAndGlyphs">PB10008</text><text transform="translate(235.80 640.00) scale(1 1.04)" font-size="9.6" fill="#000" stroke="#000" stroke-width="0.05" >INV</text><text transform="translate(374.49 640.00) scale(1 1.04)" font-size="9.6" fill="#000" stroke="#000" stroke-width="0.05" text-anchor="end" >2/28/2027</text><text transform="translate(446.29 640.00) scale(1 1.04)" font-size="9.6" fill="#000" stroke="#000" stroke-width="0.05" text-anchor="end" >2/28/2027</text><text transform="translate(542.69 640.00) scale(1 1.04)" font-size="9.6" fill="#000" stroke="#000" stroke-width="0.05" text-anchor="end" textLength="41.49" lengthAdjust="spacingAndGlyphs">18,250.00</text><text transform="translate(638.69 640.00) scale(1 1.04)" font-size="9.6" fill="#000" stroke="#000" stroke-width="0.05" text-anchor="end" textLength="41.49" lengthAdjust="spacingAndGlyphs">16,425.00</text><text transform="translate(735.36 640.00) scale(1 1.04)" font-size="9.6" fill="#000" stroke="#000" stroke-width="0.05" text-anchor="end" textLength="36.76" lengthAdjust="spacingAndGlyphs">1,825.00</text><text transform="translate(830.69 640.00) scale(1 1.04)" font-size="9.6" fill="#000" stroke="#000" stroke-width="0.05" text-anchor="end" textLength="17.39" lengthAdjust="spacingAndGlyphs">0.00</text><text transform="translate(927.56 640.00) scale(1 1.04)" font-size="9.6" fill="#000" stroke="#000" stroke-width="0.05" text-anchor="end" textLength="36.76" lengthAdjust="spacingAndGlyphs">1,825.00</text><text transform="translate(542.93 662.70) scale(1.1000 1)" font-size="11" font-weight="bold" fill="#000" text-anchor="end">50,829.61</text><text transform="translate(638.93 662.70) scale(1.1000 1)" font-size="11" font-weight="bold" fill="#000" text-anchor="end">45,746.65</text><text transform="translate(734.81 662.70) scale(1.0977 1)" font-size="11" font-weight="bold" fill="#000" text-anchor="end">5,082.96</text><text transform="translate(831.46 662.70) scale(1.1000 1)" font-size="11" font-weight="bold" fill="#000" text-anchor="end">0.00</text><text transform="translate(927.01 662.70) scale(1.0977 1)" font-size="11" font-weight="bold" fill="#000" text-anchor="end">5,082.96</text><text transform="translate(14.33 682.00) scale(0.9696 1)" font-size="11" fill="#000">1008</text><text transform="translate(134.26 682.00) scale(0.9361 1)" font-size="11" fill="#000">ELEC/Proj AIA Rate Class MILW</text><text transform="translate(380.12 682.00) scale(0.9765 1)" font-size="11" fill="#000">105</text><text transform="translate(548.13 682.00) scale(0.8739 1)" font-size="11" fill="#000">LAKE PARK GOLF SUPPLY</text><text transform="translate(135.00 700.00) scale(1 1.04)" font-size="9.6" fill="#000" stroke="#000" stroke-width="0.05" textLength="34.78" lengthAdjust="spacingAndGlyphs">PB10001</text><text transform="translate(235.80 700.00) scale(1 1.04)" font-size="9.6" fill="#000" stroke="#000" stroke-width="0.05" >INV</text><text transform="translate(375.49 700.00) scale(1 1.04)" font-size="9.6" fill="#000" stroke="#000" stroke-width="0.05" text-anchor="end" textLength="43.49" lengthAdjust="spacing">4/12/2026</text><text transform="translate(447.29 700.00) scale(1 1.04)" font-size="9.6" fill="#000" stroke="#000" stroke-width="0.05" text-anchor="end" textLength="43.49" lengthAdjust="spacing">4/12/2026</text><text transform="translate(543.36 700.00) scale(1 1.04)" font-size="9.6" fill="#000" stroke="#000" stroke-width="0.05" text-anchor="end" textLength="36.76" lengthAdjust="spacingAndGlyphs">4,330.00</text><text transform="translate(639.36 700.00) scale(1 1.04)" font-size="9.6" fill="#000" stroke="#000" stroke-width="0.05" text-anchor="end" textLength="36.76" lengthAdjust="spacingAndGlyphs">3,897.00</text><text transform="translate(735.34 700.00) scale(1 1.04)" font-size="9.6" fill="#000" stroke="#000" stroke-width="0.05" text-anchor="end" textLength="28.84" lengthAdjust="spacingAndGlyphs">433.00</text><text transform="translate(830.69 700.00) scale(1 1.04)" font-size="9.6" fill="#000" stroke="#000" stroke-width="0.05" text-anchor="end" textLength="17.39" lengthAdjust="spacingAndGlyphs">0.00</text><text transform="translate(927.54 700.00) scale(1 1.04)" font-size="9.6" fill="#000" stroke="#000" stroke-width="0.05" text-anchor="end" textLength="28.84" lengthAdjust="spacingAndGlyphs">433.00</text><text transform="translate(135.00 720.00) scale(1 1.04)" font-size="9.6" fill="#000" stroke="#000" stroke-width="0.05" textLength="34.78" lengthAdjust="spacingAndGlyphs">PB10004</text><text transform="translate(235.80 720.00) scale(1 1.04)" font-size="9.6" fill="#000" stroke="#000" stroke-width="0.05" >INV</text><text transform="translate(374.49 720.00) scale(1 1.04)" font-size="9.6" fill="#000" stroke="#000" stroke-width="0.05" text-anchor="end" >1/31/2027</text><text transform="translate(446.29 720.00) scale(1 1.04)" font-size="9.6" fill="#000" stroke="#000" stroke-width="0.05" text-anchor="end" >1/31/2027</text><text transform="translate(543.69 720.00) scale(1 1.04)" font-size="9.6" fill="#000" stroke="#000" stroke-width="0.05" text-anchor="end" >39,440.95</text><text transform="translate(639.69 720.00) scale(1 1.04)" font-size="9.6" fill="#000" stroke="#000" stroke-width="0.05" text-anchor="end" >35,496.85</text><text transform="translate(735.36 720.00) scale(1 1.04)" font-size="9.6" fill="#000" stroke="#000" stroke-width="0.05" text-anchor="end" textLength="36.76" lengthAdjust="spacingAndGlyphs">3,944.10</text><text transform="translate(830.69 720.00) scale(1 1.04)" font-size="9.6" fill="#000" stroke="#000" stroke-width="0.05" text-anchor="end" textLength="17.39" lengthAdjust="spacingAndGlyphs">0.00</text><text transform="translate(927.56 720.00) scale(1 1.04)" font-size="9.6" fill="#000" stroke="#000" stroke-width="0.05" text-anchor="end" textLength="36.76" lengthAdjust="spacingAndGlyphs">3,944.10</text><text transform="translate(135.00 740.00) scale(1 1.04)" font-size="9.6" fill="#000" stroke="#000" stroke-width="0.05" textLength="34.78" lengthAdjust="spacingAndGlyphs">PB10008</text><text transform="translate(235.80 740.00) scale(1 1.04)" font-size="9.6" fill="#000" stroke="#000" stroke-width="0.05" >INV</text><text transform="translate(374.49 740.00) scale(1 1.04)" font-size="9.6" fill="#000" stroke="#000" stroke-width="0.05" text-anchor="end" >2/28/2027</text><text transform="translate(446.29 740.00) scale(1 1.04)" font-size="9.6" fill="#000" stroke="#000" stroke-width="0.05" text-anchor="end" >2/28/2027</text><text transform="translate(543.36 740.00) scale(1 1.04)" font-size="9.6" fill="#000" stroke="#000" stroke-width="0.05" text-anchor="end" textLength="36.76" lengthAdjust="spacingAndGlyphs">4,330.00</text><text transform="translate(639.36 740.00) scale(1 1.04)" font-size="9.6" fill="#000" stroke="#000" stroke-width="0.05" text-anchor="end" textLength="36.76" lengthAdjust="spacingAndGlyphs">3,897.00</text><text transform="translate(735.34 740.00) scale(1 1.04)" font-size="9.6" fill="#000" stroke="#000" stroke-width="0.05" text-anchor="end" textLength="28.84" lengthAdjust="spacingAndGlyphs">433.00</text><text transform="translate(830.69 740.00) scale(1 1.04)" font-size="9.6" fill="#000" stroke="#000" stroke-width="0.05" text-anchor="end" textLength="17.39" lengthAdjust="spacingAndGlyphs">0.00</text><text transform="translate(927.54 740.00) scale(1 1.04)" font-size="9.6" fill="#000" stroke="#000" stroke-width="0.05" text-anchor="end" textLength="28.84" lengthAdjust="spacingAndGlyphs">433.00</text><text transform="translate(542.93 762.70) scale(1.1000 1)" font-size="11" font-weight="bold" fill="#000" text-anchor="end">48,100.95</text><text transform="translate(638.93 762.70) scale(1.1000 1)" font-size="11" font-weight="bold" fill="#000" text-anchor="end">43,290.85</text><text transform="translate(734.81 762.70) scale(1.0977 1)" font-size="11" font-weight="bold" fill="#000" text-anchor="end">4,810.10</text><text transform="translate(831.46 762.70) scale(1.1000 1)" font-size="11" font-weight="bold" fill="#000" text-anchor="end">0.00</text><text transform="translate(927.01 762.70) scale(1.0977 1)" font-size="11" font-weight="bold" fill="#000" text-anchor="end">4,810.10</text><text transform="translate(15.30 782.80) scale(0.9754 1)" font-size="11" font-weight="bold" fill="#000">Division COMMERCIAL</text><text transform="translate(154.10 782.80) scale(1.0310 1)" font-size="11" font-weight="bold" fill="#000">Total:</text><text transform="translate(543.07 782.80) scale(1.1018 1)" font-size="11" font-weight="bold" fill="#000" text-anchor="end">327,440.56</text><text transform="translate(639.07 782.80) scale(1.1018 1)" font-size="11" font-weight="bold" fill="#000" text-anchor="end">295,106.50</text><text transform="translate(734.93 782.80) scale(1.1000 1)" font-size="11" font-weight="bold" fill="#000" text-anchor="end">32,334.06</text><text transform="translate(831.46 782.80) scale(1.1000 1)" font-size="11" font-weight="bold" fill="#000" text-anchor="end">0.00</text><text transform="translate(927.13 782.80) scale(1.1000 1)" font-size="11" font-weight="bold" fill="#000" text-anchor="end">32,334.06</text>
</svg>
</body></html>
